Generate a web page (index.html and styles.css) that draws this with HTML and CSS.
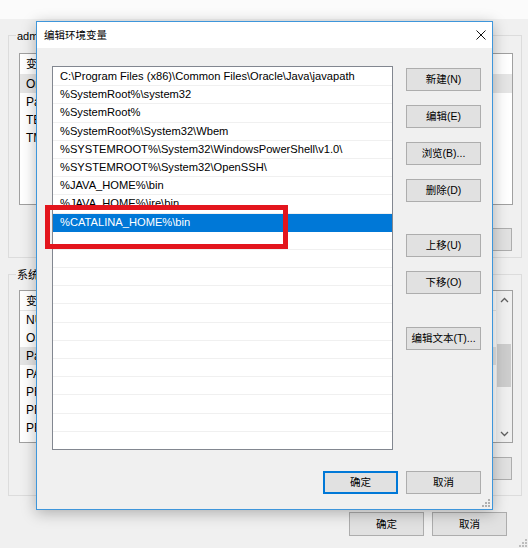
FILE: index.html
```html
<!DOCTYPE html>
<html lang="zh-CN">
<head>
<meta charset="utf-8">
<title>编辑环境变量</title>
<link rel="stylesheet" href="styles.css">
</head>
<body>
<div class="bgwin">
  <div class="topstrip"></div>
  <div class="group g1">
    <div class="legend">administrator 的用户变量(U)</div>
    <div class="lv lv1">
      <div class="hdr">变量</div>
      <div class="r sel">OneDrive</div>
      <div class="r">Path</div>
      <div class="r">TEMP</div>
      <div class="r">TMP</div>
    </div>
    <div class="btnrow">
      <button class="btn">新建(N)...</button>
      <button class="btn">编辑(E)...</button>
      <button class="btn">删除(D)</button>
    </div>
  </div>
  <div class="group g2">
    <div class="legend">系统变量(S)</div>
    <div class="lv lv2">
      <div class="lvbody">
        <div class="hdr">变量</div>
        <div class="r">NUMBER_OF_PROCESSORS</div>
        <div class="r">OS</div>
        <div class="r sel">Path</div>
        <div class="r">PATHEXT</div>
        <div class="r">PROCESSOR_ARCHITECTURE</div>
        <div class="r">PROCESSOR_IDENTIFIER</div>
        <div class="r">PROCESSOR_LEVEL</div>
      </div>
      <div class="sb">
        <div class="sbarrow"><svg width="9" height="6" viewBox="0 0 9 6"><path d="M1 5 L4.5 1.5 L8 5" fill="none" stroke="#606060" stroke-width="1.3"/></svg></div>
        <div class="sbtrack"><div class="sbthumb"></div></div>
        <div class="sbarrow"><svg width="9" height="6" viewBox="0 0 9 6"><path d="M1 1 L4.5 4.5 L8 1" fill="none" stroke="#606060" stroke-width="1.3"/></svg></div>
      </div>
    </div>
    <div class="btnrow g2row">
      <button class="btn">新建(W)...</button>
      <button class="btn">编辑(I)...</button>
      <button class="btn">删除(L)</button>
    </div>
  </div>
  <div class="okrow">
    <button class="btn">确定</button>
    <button class="btn">取消</button>
  </div>
  <svg class="grip bggrip" width="8" height="8" viewBox="0 0 8 8"><rect x="6" y="0" width="2" height="2" fill="#bdbdbd"/><rect x="3" y="3" width="2" height="2" fill="#bdbdbd"/><rect x="6" y="3" width="2" height="2" fill="#bdbdbd"/><rect x="0" y="6" width="2" height="2" fill="#bdbdbd"/><rect x="3" y="6" width="2" height="2" fill="#bdbdbd"/><rect x="6" y="6" width="2" height="2" fill="#bdbdbd"/></svg>
</div>

<div class="dlg">
  <div class="titlebar">
    <span class="title">编辑环境变量</span>
    <svg class="close" width="10" height="10" viewBox="0 0 10 10"><path d="M0.5 0.5 L9.5 9.5 M9.5 0.5 L0.5 9.5" stroke="#111" stroke-width="1"/></svg>
  </div>
  <div class="dlg-body">
    <div class="dlg-main">
      <div class="dlg-list">
        <div class="row">C:\Program Files (x86)\Common Files\Oracle\Java\javapath</div>
        <div class="row">%SystemRoot%\system32</div>
        <div class="row">%SystemRoot%</div>
        <div class="row">%SystemRoot%\System32\Wbem</div>
        <div class="row">%SYSTEMROOT%\System32\WindowsPowerShell\v1.0\</div>
        <div class="row">%SYSTEMROOT%\System32\OpenSSH\</div>
        <div class="row">%JAVA_HOME%\bin</div>
        <div class="row">%JAVA_HOME%\jre\bin</div>
        <div class="row active"><span class="edit">%CATALINA_HOME%\bin</span></div>
        <div class="row"></div>
        <div class="row"></div>
        <div class="row"></div>
        <div class="row"></div>
        <div class="row"></div>
        <div class="row"></div>
        <div class="row"></div>
        <div class="row"></div>
        <div class="row"></div>
        <div class="row"></div>
        <div class="row"></div>
        <div class="row"></div>
      </div>
      <div class="dlg-btns">
        <button class="btn">新建(N)</button>
        <button class="btn">编辑(E)</button>
        <button class="btn">浏览(B)...</button>
        <button class="btn">删除(D)</button>
        <button class="btn sp1">上移(U)</button>
        <button class="btn">下移(O)</button>
        <button class="btn sp2">编辑文本(T)...</button>
      </div>
    </div>
    <div class="dlg-foot">
      <button class="btn default">确定</button>
      <button class="btn">取消</button>
    </div>
  </div>
  <svg class="grip dlggrip" width="8" height="8" viewBox="0 0 8 8"><rect x="6" y="0" width="2" height="2" fill="#b0b0b0"/><rect x="3" y="3" width="2" height="2" fill="#b0b0b0"/><rect x="6" y="3" width="2" height="2" fill="#b0b0b0"/><rect x="0" y="6" width="2" height="2" fill="#b0b0b0"/><rect x="3" y="6" width="2" height="2" fill="#b0b0b0"/><rect x="6" y="6" width="2" height="2" fill="#b0b0b0"/></svg>
</div>

<div class="redbox"></div>
</body>
</html>
```

FILE: styles.css
```css
* { box-sizing: border-box; }

html, body {
  margin: 0;
  padding: 0;
}

body {
  width: 528px;
  height: 548px;
  overflow: hidden;
  position: relative;
  background: #f0f0f0;
  font-family: "Liberation Sans", "Noto Sans CJK SC", sans-serif;
  font-size: 11px;
  color: #000;
}

.bgwin {
  width: 528px;
  height: 548px;
  background: #f0f0f0;
  display: flex;
  flex-direction: column;
  position: relative;
}

.topstrip {
  height: 19px;
  background: #fbfbfb;
  flex: none;
}

.group {
  margin-left: 8px;
  width: 514px;
  border: 1px solid #dcdcdc;
  display: flex;
  flex-direction: column;
  flex: none;
}

.g1 {
  margin-top: 16px;
  padding-bottom: 6px;
}

.g2 {
  margin-top: 16px;
  padding-bottom: 15px;
}

.legend {
  margin-top: -7px;
  margin-left: 7px;
  height: 14px;
  line-height: 14px;
  padding: 0 1px;
  background: #f0f0f0;
  align-self: flex-start;
  font-size: 11px;
  white-space: nowrap;
}

.lv {
  margin-left: 10px;
  width: 494px;
  background: #fff;
  border: 1px solid #a0a0a0;
  overflow: hidden;
}

.lv1 {
  margin-top: 10px;
  height: 152px;
}

.lv2 {
  margin-top: 8px;
  height: 153px;
  display: flex;
}

.lvbody {
  flex: 1;
}

.hdr {
  height: 20px;
  line-height: 20px;
  padding-left: 6px;
  border-bottom: 1px solid #e5e5e5;
  font-size: 11px;
  white-space: nowrap;
}

.r {
  height: 18px;
  line-height: 18px;
  padding-left: 6px;
  white-space: nowrap;
  font-size: 12px;
}

.r.sel {
  background: #e5e5e5;
}

.lv1 .hdr {
  height: 21px;
  line-height: 21px;
}

.sb {
  width: 16px;
  flex: none;
  background: #f0f0f0;
  display: flex;
  flex-direction: column;
}

.sbarrow {
  height: 17px;
  display: flex;
  align-items: center;
  justify-content: center;
  flex: none;
}

.sbtrack {
  flex: 1;
  padding: 36px 1px 0 1px;
}

.sbthumb {
  height: 43px;
  background: #cdcdcd;
}

.btnrow {
  display: flex;
  justify-content: flex-end;
  gap: 8px;
  padding-right: 9px;
  margin-top: 23px;
}

.g2row {
  margin-top: 14px;
}

.btn {
  width: 75px;
  height: 23px;
  margin: 0;
  padding: 0;
  background: #e1e1e1;
  border: 1px solid #adadad;
  font-family: "Liberation Sans", "Noto Sans CJK SC", sans-serif;
  font-size: 10.5px;
  color: #000;
  line-height: 21px;
  white-space: nowrap;
  flex: none;
}

.okrow {
  display: flex;
  justify-content: flex-end;
  gap: 8px;
  padding-right: 21px;
  margin-top: 16px;
}

.okrow .btn {
  height: 24px;
}

.grip {
  position: absolute;
  display: block;
}

.bggrip {
  right: 1px;
  bottom: 1px;
}

/* dialog window on top of the background window */
.dlg {
  position: absolute;
  left: 36px;
  top: 21px;
  width: 457px;
  height: 489px;
  border: 1px solid #3e96db;
  background: #f0f0f0;
  box-shadow: 0 3px 14px rgba(0, 0, 0, 0.28);
  display: flex;
  flex-direction: column;
}

.titlebar {
  height: 26px;
  background: #fff;
  display: flex;
  align-items: center;
  padding-left: 7px;
  padding-right: 6px;
  flex: none;
}

.title {
  flex: 1;
  font-size: 10.5px;
  line-height: 14px;
}

.close {
  display: block;
}

.dlg-body {
  flex: 1;
  display: flex;
  flex-direction: column;
  padding: 18px 11px 0 15px;
}

.dlg-main {
  display: flex;
  gap: 13px;
}

.dlg-list {
  width: 341px;
  height: 384px;
  border: 1px solid #828790;
  background: #fff;
  padding-top: 1px;
  overflow: hidden;
  flex: none;
}

.row {
  height: 18.2px;
  line-height: 17px;
  border-bottom: 1px solid #f0f0f0;
  padding-left: 7px;
  white-space: nowrap;
  font-size: 11.15px;
}

.row.active {
  background: #0078d7;
  color: #fff;
  border-bottom-color: #0078d7;
}

.dlg-btns {
  display: flex;
  flex-direction: column;
  padding-top: 2px;
  gap: 14px;
}

.dlg-btns .sp1 {
  margin-top: 18px;
}

.dlg-btns .sp2 {
  margin-top: 19px;
}

.dlg-foot {
  display: flex;
  justify-content: flex-end;
  gap: 8px;
  margin-top: 21px;
}

.btn.default {
  border: 2px solid #0078d7;
  line-height: 19px;
}

.dlggrip {
  right: 2px;
  bottom: 2px;
}

.redbox {
  position: absolute;
  left: 45px;
  top: 205px;
  width: 243px;
  height: 44px;
  border: 5px solid #e3151d;
}
```
